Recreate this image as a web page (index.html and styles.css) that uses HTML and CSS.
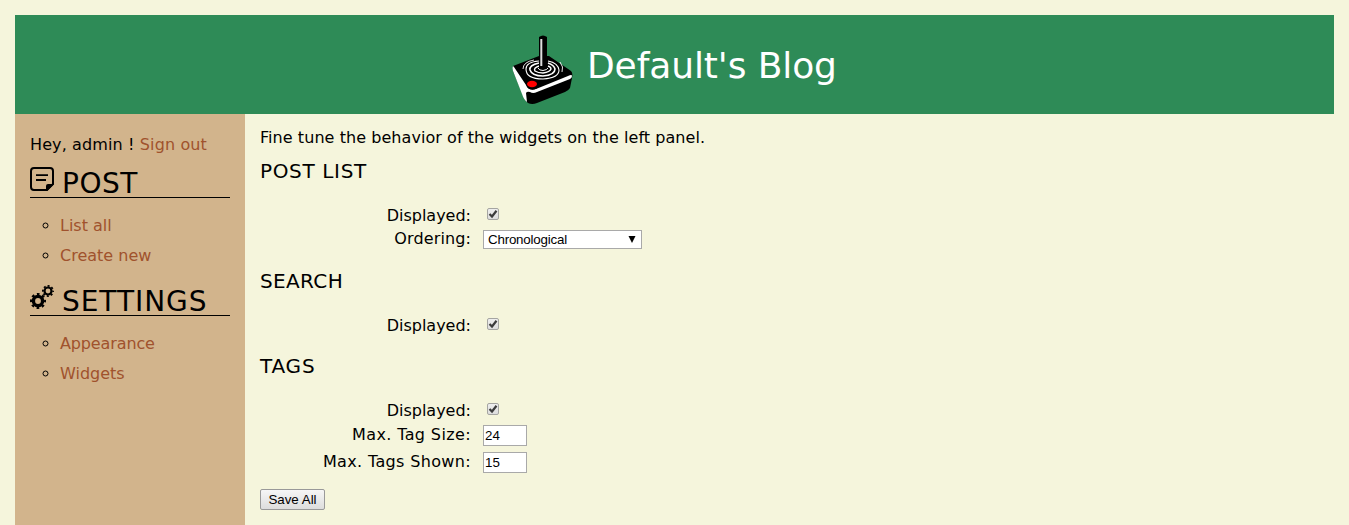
FILE: index.html
```html
<!DOCTYPE html>
<html lang="en">
<head>
<meta charset="utf-8">
<title>Default's Blog</title>
<link rel="stylesheet" href="styles.css">
</head>
<body>
<header class="banner">
  <svg class="logo" width="62" height="70" viewBox="0 0 62 70">
    <path d="M1 31 27 21 37 21 59 36Q61 38 60 43L58 53Q57 55 53 57L25 68Q20 70 16 68L13 65 1 36Z"/>
    <path d="M1 31Q0 33 1 36L10 59Q12 65 15 67L14 58Q15 56 18 57Q21 59 25 57L58 44Q60 43 60 41Q60 39 56 41L24 54Q19 56 16 53L2 32Z" fill="#fff"/>
    <g fill="none" stroke="#fff">
      <path d="M27 26Q14 27 14 34Q14 44 31 44Q47 43 47 35Q46 28 36 26" stroke-width="1.1"/>
      <path d="M27 28Q17 30 18 35Q20 41 31 41Q43 40 43 34Q42 30 36 28" stroke-width="1.6"/>
      <path d="M27 31Q21 33 23 36Q26 38 31 38Q38 37 39 34Q39 32 36 31" stroke-width="1.4"/>
      <path d="M26 33Q27 35.5 31 35.5Q35 35 36 33" stroke-width="1"/>
      <path d="M48 27Q52 32 50 37" stroke-width=".9"/>
      <path d="M22 25Q11 27 11 34" stroke-width=".9"/>
    </g>
    <path d="M27 2Q31-1 35 2V32Q31 35 27 32Z"/>
    <path d="M29.3 4V31" stroke="#ddd" stroke-width="2"/>
    <ellipse cx="20.5" cy="50.5" rx="6" ry="4"/>
    <ellipse cx="20" cy="49" rx="5" ry="3.3" fill="red"/>
  </svg>
  <h1 class="title">Default's Blog</h1>
</header>
<div class="layout">
  <nav class="sidebar">
    <p class="greeting">Hey, admin ! <a class="link signout">Sign out</a></p>
    <section class="group">
      <h2 class="group-title">
        <svg class="icon" width="24" height="24" viewBox="0 0 24 24">
          <path d="M4 1H20Q23 1 23 4V17L17 23H4Q1 23 1 20V4Q1 1 4 1Z" fill="none" stroke="#000" stroke-width="2"/>
          <path d="M16 24V19Q16 17 18 17H24L17 24Z"/>
          <path d="M6 8.2H18M6 13H16" stroke="#000" stroke-width="1.8"/>
        </svg><span class="post">POST</span>
      </h2>
      <ul class="menu">
        <li><a class="link list-all">List all</a></li>
        <li><a class="link create">Create new</a></li>
      </ul>
    </section>
    <section class="group">
      <h2 class="group-title">
        <svg class="icon" width="24" height="24" viewBox="0 0 24 24">
          <g fill="none" stroke="#000">
            <circle cx="8" cy="16" r="4.6" stroke-width="3.4"/>
            <circle cx="8" cy="16" r="6.9" stroke-width="2.2" stroke-dasharray="2.71 2.71" stroke-dashoffset="1.35"/>
            <circle cx="18" cy="6" r="3.5" stroke-width="2.2"/>
            <circle cx="18" cy="6" r="5.1" stroke-width="1.8" stroke-dasharray="2 2" stroke-dashoffset="1"/>
          </g>
        </svg><span class="settings">SETTINGS</span>
      </h2>
      <ul class="menu">
        <li><a class="link appearance">Appearance</a></li>
        <li><a class="link widgets">Widgets</a></li>
      </ul>
    </section>
  </nav>
  <main class="content">
    <p class="intro">Fine tune the behavior of the widgets on the left panel.</p>
    <h3 class="heading h-post">POST LIST</h3>
    <div class="fields fields-post">
      <div class="row"><span class="label displayed">Displayed:</span><span class="check"><svg width="12" height="12" viewBox="0 0 12 12"><path class="tick" d="M2.5 6 5 8.5 9.5 2.8"/></svg></span></div>
      <div class="row row-select"><span class="label ordering">Ordering:</span><span class="select"><span class="value">Chronological</span><svg width="8" height="7" viewBox="0 0 8 7"><path d="M.5 0H7.5L4 7Z"/></svg></span></div>
    </div>
    <h3 class="heading h-search">SEARCH</h3>
    <div class="fields fields-search">
      <div class="row"><span class="label displayed">Displayed:</span><span class="check"><svg width="12" height="12" viewBox="0 0 12 12"><path class="tick" d="M2.5 6 5 8.5 9.5 2.8"/></svg></span></div>
    </div>
    <h3 class="heading h-tags">TAGS</h3>
    <div class="fields fields-tags">
      <div class="row"><span class="label displayed">Displayed:</span><span class="check"><svg width="12" height="12" viewBox="0 0 12 12"><path class="tick" d="M2.5 6 5 8.5 9.5 2.8"/></svg></span></div>
      <div class="row row-input"><span class="label tag-size">Max. Tag Size:</span><input class="number" value="24"></div>
      <div class="row row-input"><span class="label tags-shown">Max. Tags Shown:</span><input class="number" value="15"></div>
    </div>
    <button class="save">Save All</button>
  </main>
</div>
</body>
</html>
```
FILE: styles.css
```css
* { box-sizing: border-box; }
html { height: 100%; overflow: hidden; }
body {
  display: flex;
  flex-direction: column;
  height: 100%;
  margin: 0;
  padding: 15px 15px 0;
  background: #f5f5dc;
  color: #000;
  font: 16px/20px "DejaVu Sans", sans-serif;
  white-space: nowrap;
}
h1, h2, h3, p, ul { margin: 0; padding: 0; font-weight: normal; }
.banner {
  display: flex;
  justify-content: center;
  flex: none;
  height: 99px;
  padding-top: 20px;
  background: #2e8b57;
  color: #fff;
}
.logo { margin-right: 13px; }
.title { width: 250px; font-size: 36px; line-height: 62px; letter-spacing: -0.1px; }
.layout { display: flex; flex: 1; min-height: 0; }
.sidebar { width: 230px; padding: 21px 15px 0; background: #d2b48c; }
.greeting { height: 32px; letter-spacing: 0.12px; }
.link { color: #a0522d; }
.group { height: 118px; }
.group-title {
  display: flex;
  height: 31px;
  border-bottom: 1px solid #000;
  font-size: 28px;
  line-height: 33px;
}
.post { letter-spacing: 0.5px; }
.settings { letter-spacing: 0.95px; }
.icon { flex: none; margin-right: 8px; }
.menu { padding: 13px 0 0 30px; list-style: circle; }
.menu li { height: 30px; line-height: 30px; }
.appearance { letter-spacing: -0.13px; }
.content { padding: 14px 15px 0; }
.intro { height: 30px; letter-spacing: 0.06px; }
.heading { font-size: 20px; line-height: 26px; }
.h-post { letter-spacing: 0.65px; }
.h-search { letter-spacing: 0.35px; }
.h-tags { letter-spacing: 0.8px; }
.fields { padding-top: 20px; }
.fields-post { padding-bottom: 18px; }
.fields-search { padding-bottom: 16px; }
.fields-tags { padding-bottom: 13px; }
.row { display: flex; height: 23px; }
.label { width: 211px; margin-right: 12px; text-align: right; line-height: 24px; }
.ordering { letter-spacing: 0.12px; }
.tag-size { letter-spacing: 0.38px; }
.tags-shown { letter-spacing: 0.35px; }
.check {
  width: 12px;
  height: 12px;
  margin: 4px 0 0 4px;
  border: 1px solid #a5a5a2;
  border-radius: 2px;
  background: linear-gradient(#eee, #ddd);
}
.check svg { display: block; margin: -1px; }
.tick { fill: none; stroke: #3c3c3c; stroke-width: 2.2; }
.select {
  display: flex;
  justify-content: space-between;
  width: 159px;
  height: 19px;
  margin-top: 3px;
  padding: 0 5px 0 4px;
  border: 1px solid #a9a9a9;
  background: #fff;
  font: 13.33px/18px "Liberation Sans", sans-serif;
}
.value { letter-spacing: -0.2px; }
.select svg { margin-top: 5px; }
.row-input { height: 27px; }
.row-input .label { line-height: 26px; }
.number {
  width: 44px;
  height: 21px;
  margin: 3px 0 0;
  padding: 1px;
  border: 1px solid #a9a9a9;
  background: #fff;
  font: 13.33px "Liberation Sans", sans-serif;
}
.save {
  display: block;
  width: 65px;
  height: 21px;
  padding: 0;
  border: 1px solid #999;
  border-radius: 2px;
  background: linear-gradient(#f6f6f6, #ddd);
  font: 13.33px/18px "Liberation Sans", sans-serif;
}
```
